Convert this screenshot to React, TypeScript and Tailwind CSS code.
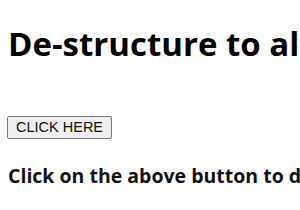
import React from "react";

export default function App() {
  return (
    <div className="w-[300px] h-[210px] overflow-hidden bg-white px-2 whitespace-nowrap flex flex-col items-start">
      <h1 className="text-[33px] font-bold mt-[25px] leading-[1.15] text-black font-['Open_Sans','Noto_Sans',sans-serif]">
        De-structure to alter the state
      </h1>
      <div className="h-[53px]"></div>
      <button className="px-[8px] py-[2px] border border-[#767676] bg-[#efefef] rounded-[2px] text-[14.5px] text-[#111] leading-[1.2] font-['Liberation_Sans',Arial,sans-serif] -ml-px">
        CLICK HERE
      </button>
      <h3 className="text-[19.5px] font-bold mt-[24px] leading-[1.3] text-[#111] font-['Open_Sans','Noto_Sans',sans-serif]">
        Click on the above button to destructure the object
      </h3>
    </div>
  );
}
